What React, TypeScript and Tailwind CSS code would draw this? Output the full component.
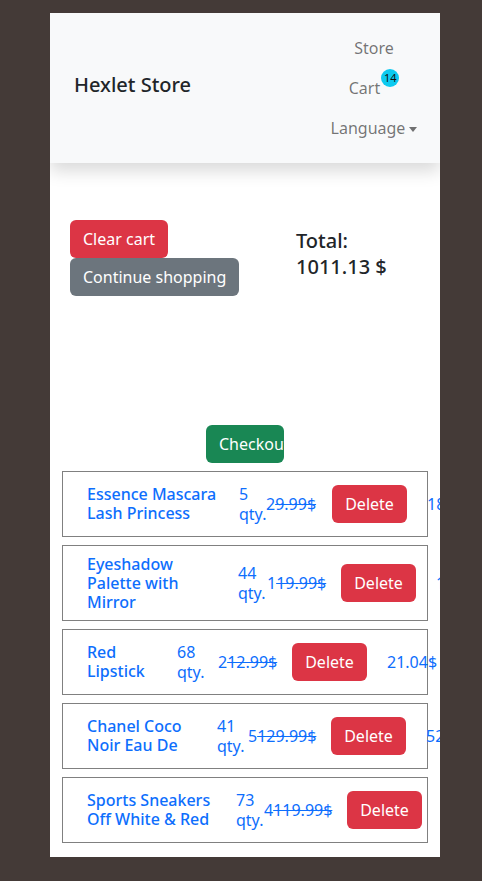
import React from "react";

type Row = {
  name: string[];
  qty: string;
  nameW: string;
  qtyW: string;
  priceW: string;
  lead: string;
  price: string;
  total: string;
  h: string;
};

const rows: Row[] = [
  { name: ["Essence Mascara", "Lash Princess"], qty: "5", nameW: "w-[152px]", qtyW: "w-[27px]", priceW: "w-[66px]", lead: "2", price: "9.99$", total: "18.55$", h: "h-[66px]" },
  { name: ["Eyeshadow", "Palette with", "Mirror"], qty: "44", nameW: "w-[151px]", qtyW: "w-[29px]", priceW: "w-[74px]", lead: "1", price: "19.99$", total: "19.99$", h: "h-[76px]" },
  { name: ["Red", "Lipstick"], qty: "68", nameW: "w-[90px]", qtyW: "w-[41px]", priceW: "w-[74px]", lead: "2", price: "12.99$", total: "21.04$", h: "h-[66px]" },
  { name: ["Chanel Coco", "Noir Eau De"], qty: "41", nameW: "w-[130px]", qtyW: "w-[31px]", priceW: "w-[83px]", lead: "5", price: "129.99$", total: "5249.59$", h: "h-[66px]" },
  { name: ["Sports Sneakers", "Off White & Red"], qty: "73", nameW: "w-[149px]", qtyW: "w-[28px]", priceW: "w-[83px]", lead: "4", price: "119.99$", total: "8759.27$", h: "h-[66px]" },
];

export default function App() {
  return (
    <div
      className="min-h-[881px] bg-[#443a37] pt-[13px] pb-[24px] text-[16px]"
      style={{ fontFamily: '"Noto Sans", "Open Sans", sans-serif' }}
    >
      <div className="ml-[50px] w-[390px] h-[844px] bg-white overflow-hidden">
        {/* Navbar */}
        <nav className="relative z-10 h-[150px] bg-[#f8f9fa] shadow-[0_8px_16px_rgba(0,0,0,0.15)] flex items-center justify-between">
          <div className="pl-[24px] -mt-[6px] text-[20px] leading-[30px] font-medium text-[#212529]">
            Hexlet Store
          </div>
          <div className="mr-[16px] w-[100px] flex flex-col items-center text-black/55 leading-[24px]">
            <div className="h-[40px] flex items-center">Store</div>
            <div className="h-[40px] flex items-center">
              <span>Cart</span>
              <span className="relative -top-[10px] ml-[1px] w-[18px] h-[18px] rounded-full bg-[#0dcaf0] text-[#111] text-[11px] leading-[18px] text-center">
                14
              </span>
            </div>
            <div className="h-[40px] flex items-center">
              Language
              <span className="inline-block ml-[4px] mt-[2px] border-t-[5px] border-x-[4px] border-t-current border-x-transparent" />
            </div>
          </div>
        </nav>

        {/* Actions + total */}
        <div className="flex pt-[57px]">
          <div className="pl-[20px] w-[246px] flex flex-col items-start">
            <button className="h-[38px] px-[13px] rounded-md bg-[#dc3545] text-white leading-[24px]">
              Clear cart
            </button>
            <button className="h-[38px] px-[13px] rounded-md bg-[#6c757d] text-white leading-[24px]">
              Continue shopping
            </button>
          </div>
          <div className="mt-[8px] text-[20px] leading-[26px] font-medium text-[#212529]">
            <div>Total:</div>
            <div>1011.13 $</div>
          </div>
        </div>

        {/* Checkout */}
        <div className="flex justify-center mt-[129px]">
          <button className="w-[78px] h-[38px] overflow-hidden whitespace-nowrap pl-[13px] text-left rounded-md bg-[#198754] text-white leading-[24px]">
            Checkout
          </button>
        </div>

        {/* Items */}
        <div className="mt-[8px] mx-[12px] flex flex-col gap-[8px]">
          {rows.map((r, i) => (
            <div
              key={i}
              className={`${r.h} border border-[#808080] flex items-center pl-[24px] text-[#0d6efd]`}
            >
              <div className={`${r.nameW} shrink-0 font-medium leading-[19px] whitespace-nowrap`}>
                {r.name.map((l, j) => (
                  <div key={j}>{l}</div>
                ))}
              </div>
              <div className={`${r.qtyW} shrink-0 leading-[20px] whitespace-nowrap`}>
                <div>{r.qty}</div>
                <div>qty.</div>
              </div>
              <div className={`${r.priceW} shrink-0 whitespace-nowrap leading-[24px]`}>
                {r.lead}
                <span className="line-through">{r.price}</span>
              </div>
              <button className="w-[75px] h-[38px] shrink-0 rounded-md bg-[#dc3545] text-white leading-[24px]">
                Delete
              </button>
              <div className="ml-[20px] shrink-0 whitespace-nowrap">{r.total}</div>
            </div>
          ))}
        </div>
      </div>
    </div>
  );
}
